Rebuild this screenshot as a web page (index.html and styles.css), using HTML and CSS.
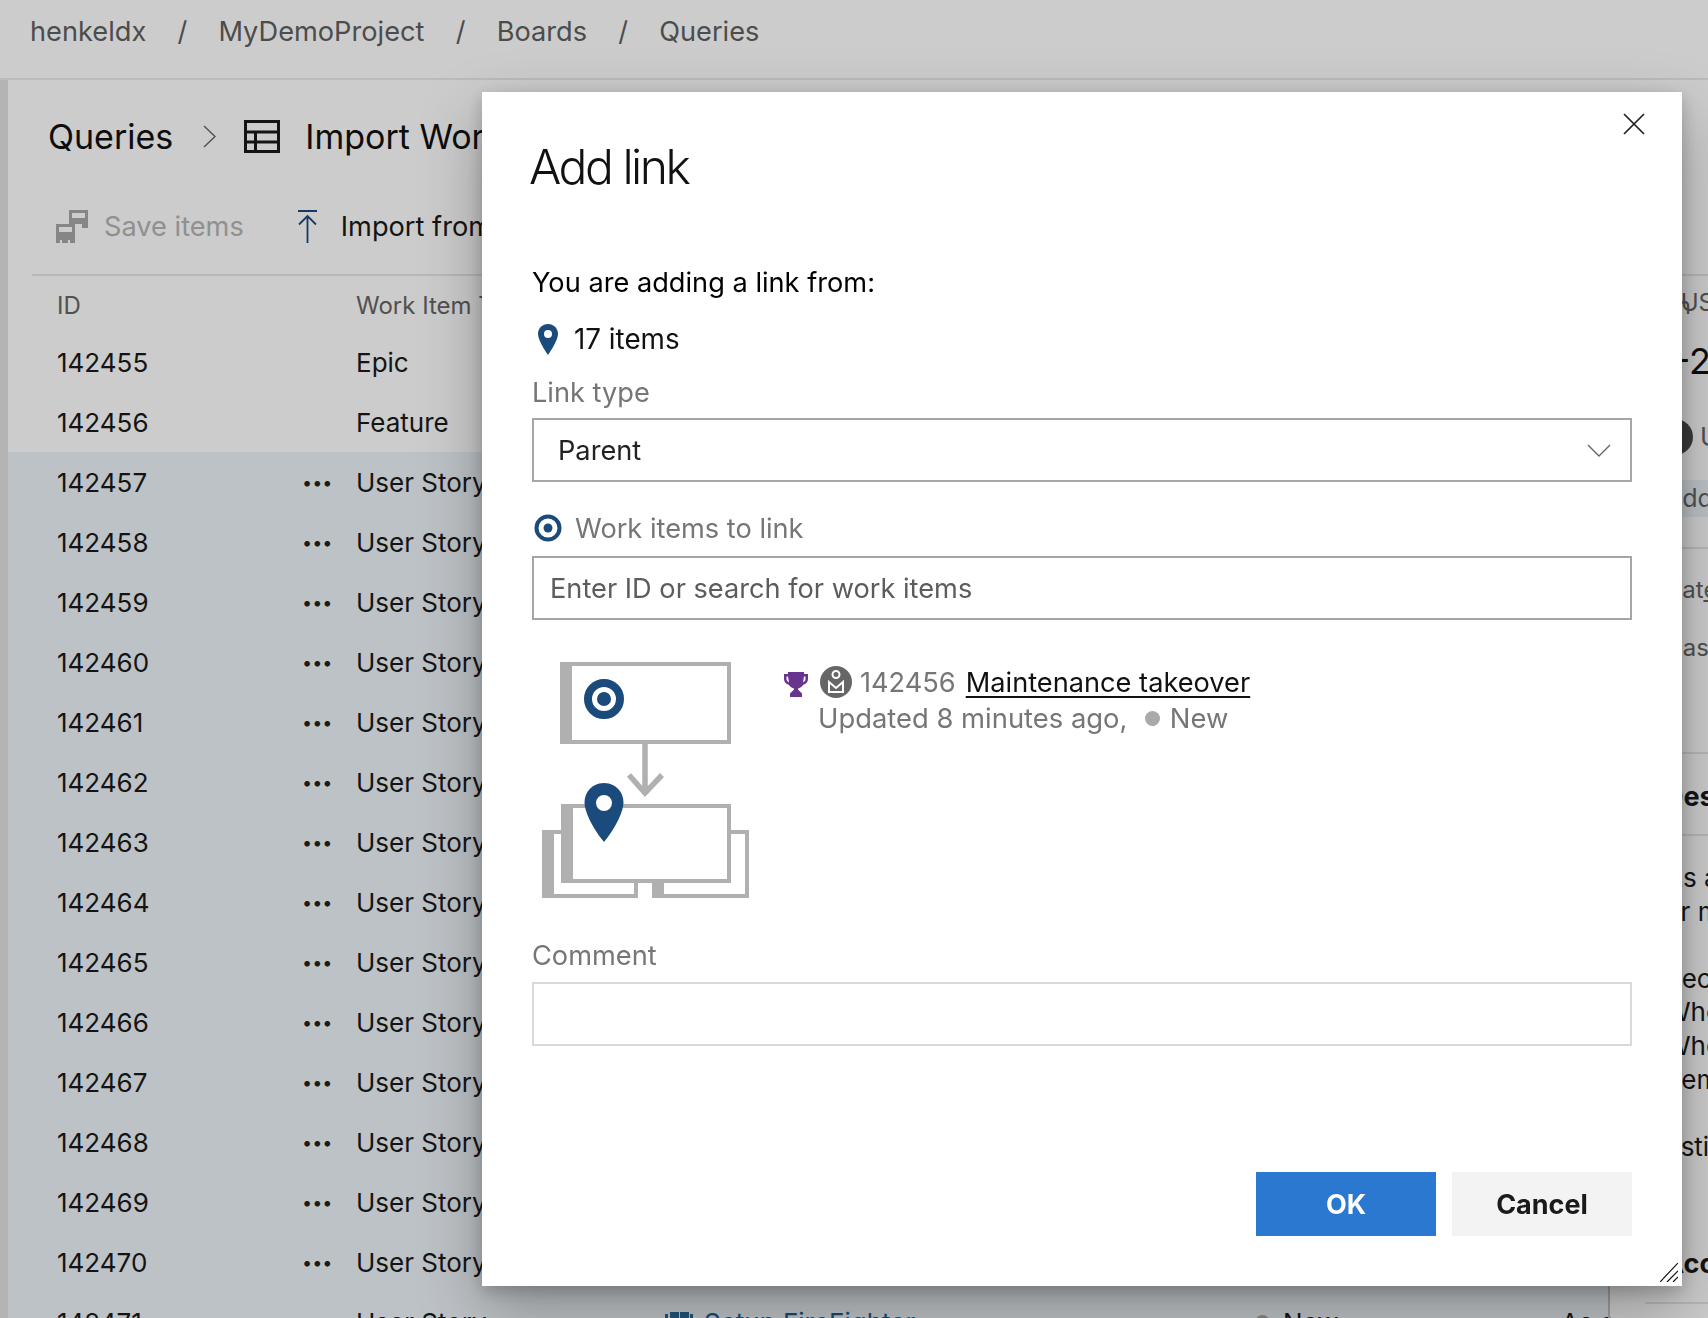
FILE: index.html
```html
<!DOCTYPE html>
<html lang="en">
<head>
<meta charset="utf-8">
<title>Add link</title>
<link rel="stylesheet" href="styles.css">
</head>
<body>
<div class="page">
  <header class="topbar">
    <span>henkeldx</span><i>/</i><span>MyDemoProject</span><i>/</i><span>Boards</span><i>/</i><span>Queries</span>
  </header>
  <div class="body">
    <div class="strip"></div>
    <main class="content">
      <div class="title-row">
        <span>Queries</span>
        <svg class="crumb-chevron" viewBox="0 0 13 23"><path d="M1 1l11 10.5L1 22" fill="none" stroke="#666" stroke-width="1.4"/></svg>
        <svg class="table-icon" viewBox="0 0 36 33"><path d="M1.500 1.500h33v30h-33zM1.500 12h33M1.500 22h33M11.500 12v19.500" fill="none" stroke="#1a1a1a" stroke-width="3"/></svg>
        <span>Import Work Items</span>
      </div>
      <div class="toolbar">
        <span class="tool disabled">
          <svg class="save-icon" viewBox="0 0 32 33"><path fill-rule="evenodd" fill="#a8a8a8" d="M13 0h19v18h-6v-4H13zM16 3v5h13V3zM0 14h19v19h-5v-3h-2v3H6v-3H4v3H0zM3 17v5h13v-5z"/></svg>
          Save items
        </span>
        <span class="tool">
          <svg class="import-icon" viewBox="0 0 20 33"><path d="M0 1h19M9.500 33V6M1 14.500l8.500-8.500 8.500 8.500" fill="none" stroke="#1b4a7d" stroke-width="1.8"/></svg>
          Import from CSV
        </span>
      </div>
      <div class="grid">
        <div class="row head"><span class="c-id">ID</span><span class="c-more"></span><span class="c-type">Work Item Type</span><span class="c-title">Title</span><span class="c-state">State</span><span class="c-desc">Description</span></div>
        <div class="row"><span class="c-id">142455</span><span class="c-more"></span><span class="c-type">Epic</span><span class="c-title"></span><span class="c-state"></span><span class="c-desc"></span></div>
        <div class="row"><span class="c-id">142456</span><span class="c-more"></span><span class="c-type">Feature</span><span class="c-title"></span><span class="c-state"></span><span class="c-desc"></span></div>
        <div class="row sel"><span class="c-id">142457</span><span class="c-more">•••</span><span class="c-type">User Story</span></div>
        <div class="row sel"><span class="c-id">142458</span><span class="c-more">•••</span><span class="c-type">User Story</span></div>
        <div class="row sel"><span class="c-id">142459</span><span class="c-more">•••</span><span class="c-type">User Story</span></div>
        <div class="row sel"><span class="c-id">142460</span><span class="c-more">•••</span><span class="c-type">User Story</span></div>
        <div class="row sel"><span class="c-id">142461</span><span class="c-more">•••</span><span class="c-type">User Story</span></div>
        <div class="row sel"><span class="c-id">142462</span><span class="c-more">•••</span><span class="c-type">User Story</span></div>
        <div class="row sel"><span class="c-id">142463</span><span class="c-more">•••</span><span class="c-type">User Story</span></div>
        <div class="row sel"><span class="c-id">142464</span><span class="c-more">•••</span><span class="c-type">User Story</span></div>
        <div class="row sel"><span class="c-id">142465</span><span class="c-more">•••</span><span class="c-type">User Story</span></div>
        <div class="row sel"><span class="c-id">142466</span><span class="c-more">•••</span><span class="c-type">User Story</span></div>
        <div class="row sel"><span class="c-id">142467</span><span class="c-more">•••</span><span class="c-type">User Story</span></div>
        <div class="row sel"><span class="c-id">142468</span><span class="c-more">•••</span><span class="c-type">User Story</span></div>
        <div class="row sel"><span class="c-id">142469</span><span class="c-more">•••</span><span class="c-type">User Story</span></div>
        <div class="row sel"><span class="c-id">142470</span><span class="c-more">•••</span><span class="c-type">User Story</span></div>
        <div class="row sel"><span class="c-id">142471</span><span class="c-more"></span><span class="c-type">User Story</span>
          <span class="c-title"><svg class="book" viewBox="0 0 28 20"><path d="M0 2h3v18H0zM5 0h9v20H5zM15 0h9v20h-9zM25 2h3v18h-3z" fill="#2a6a94"/></svg><a>Setup FireFighter</a></span>
          <span class="c-state"><b class="dot"></b>New</span><span class="c-desc">As a</span></div>
      </div>
    </main>
    <aside class="pane">
      <div class="pane-rule"></div>
      <div class="pane-line muted t-bus">BUSINESS</div>
      <div class="pane-line t-num">1-2</div>
      <div class="pane-line t-user"><b class="pane-avatar"></b>Unassigned</div>
      <div class="pane-tag">Add tag</div>
      <div class="pane-rule r2"></div>
      <div class="pane-line muted t-date">Dat<u>e</u></div>
      <div class="pane-line muted t-has">Has</div>
      <div class="pane-rule r3"></div>
      <div class="pane-line t-h">Description</div>
      <div class="pane-rule r4"></div>
      <div class="pane-text">
        <p>As a user<br>or my team</p>
        <p>Section<br>Who is it<br>When is it<br>Remember</p>
        <p>Estimate</p>
      </div>
      <div class="pane-line t-h t-acc">Acceptance</div>
      <div class="pane-rule r5"></div>
    </aside>
  </div>
</div>
<div class="overlay"></div>
<section class="modal">
  <svg class="close" viewBox="0 0 22 22"><path d="M1 1l20 20M21 1L1 21" stroke="#222" stroke-width="1.7" fill="none"/></svg>
  <h1>Add link</h1>
  <p class="from">You are adding a link from:</p>
  <div class="items">
    <svg class="pin" viewBox="0 0 20 31"><path fill-rule="evenodd" d="M10 0c5.600 0 10 4.300 10 9.800 0 5.400-5.600 15-10 21.200C5.600 24.800 0 15.200 0 9.800 0 4.300 4.400 0 10 0zm0 6a4 4 0 1 0 0 8 4 4 0 0 0 0-8z" fill="#1b4a7d"/></svg>
    <span>17 items</span>
  </div>
  <label class="lbl lbl-type">Link type</label>
  <div class="field select"><span>Parent</span>
    <svg class="chev" viewBox="0 0 24 13"><path d="M1 1l11 11L23 1" fill="none" stroke="#666" stroke-width="1.4"/></svg>
  </div>
  <div class="lbl lbl-work">
    <svg class="target" viewBox="0 0 28 28"><circle cx="14" cy="14" r="11.500" fill="none" stroke="#1b4a7d" stroke-width="4"/><circle cx="14" cy="14" r="4.500" fill="#1b4a7d"/></svg>
    Work items to link
  </div>
  <div class="field search">Enter ID or search for work items</div>
  <div class="preview">
    <svg class="diagram" viewBox="0 0 208 238">
      <path fill="#b0b0b0" d="M0 168h20v4H12v60h80v-11h4v15H0zM110 221h12v11h81v-60h-14v-4h18v68h-97z"/>
      <path d="M21 2h166v78H21z" fill="#fff" stroke="#b0b0b0" stroke-width="4"/>
      <rect x="18" y="0" width="12" height="82" fill="#b0b0b0"/>
      <path d="M21 144h166v75H21z" fill="#fff" stroke="#b0b0b0" stroke-width="4"/>
      <rect x="19" y="142" width="12" height="79" fill="#b0b0b0"/>
      <path d="M103 82v50M87 113l16 18 17-18" fill="none" stroke="#b0b0b0" stroke-width="5.500"/>
      <circle cx="62" cy="37" r="16" fill="none" stroke="#1b4a7d" stroke-width="8"/>
      <circle cx="62" cy="37" r="7" fill="#1b4a7d"/>
      <circle cx="62" cy="141" r="9" fill="#fff"/>
      <path fill-rule="evenodd" d="M62 121c11 0 19.500 8.500 19.500 19.500 0 9-8 25.500-19.500 39.500-11.500-14-19.500-30.500-19.500-39.500 0-11 8.500-19.500 19.500-19.500zm0 12a8 8 0 1 0 0 16 8 8 0 0 0 0-16z" fill="#1b4a7d"/>
    </svg>
    <div class="hit">
      <div class="hit-line">
        <svg class="trophy" viewBox="0 0 24 25"><path fill-rule="evenodd" fill="#68348f" d="M4 0h16v2h4v5c0 3-2 5-5 6-1 2-3 3-5 3.500v1l4 4V25H6v-3.500l4-4v-1C8 16 6 15 5 13c-3-1-5-3-5-6V2h4zM2.500 4.500V7c0 1.500 1 2.500 2.500 3.500L4 4.500zM21.500 4.500H20l-1 6c1.500-1 2.500-2 2.500-3.500z"/></svg>
        <svg class="avatar" viewBox="0 0 32 32"><circle cx="16" cy="16" r="16" fill="#666"/><circle cx="16" cy="8.500" r="3.500" fill="none" stroke="#fff" stroke-width="2"/><path d="M9 16l7 6 7-6v10H9z" fill="none" stroke="#fff" stroke-width="2"/></svg>
        <span class="hit-id">142456</span>
        <a class="hit-link">Maintenance takeover</a>
      </div>
      <div class="hit-meta">Updated 8 minutes ago, <b class="hit-dot"></b> New</div>
    </div>
  </div>
  <label class="lbl lbl-comment">Comment</label>
  <div class="field comment"></div>
  <div class="actions">
    <button class="btn primary">OK</button>
    <button class="btn">Cancel</button>
  </div>
  <svg class="grip" viewBox="0 0 18 19"><path d="M0 19L18 0M7 19L18 8M13 19l5-5" stroke="#111" stroke-width="1.200" fill="none"/></svg>
</section>
</body>
</html>
```
FILE: styles.css
```css
* { box-sizing: border-box; }
html, body { margin: 0; height: 100%; overflow: hidden; }
body { font-family: Inter, "Noto Sans", sans-serif; color: #1a1a1a; background: #fff; }
.page { height: 1318px; display: flex; flex-direction: column; overflow: hidden; }
.topbar { height: 80px; flex: none; background: #fff; border-bottom: 2px solid #eaeaea; padding: 0 30px 16px; display: flex; align-items: center; font-size: 27.2px; color: #5f5f5f; }
.topbar i { font-style: normal; margin: 0 31.2px; }
.body { flex: 1; display: flex; min-height: 0; }
.strip { width: 8px; flex: none; background: #e2e2e2; }
.content { width: 1600px; flex: none; }
.title-row { height: 112px; padding: 0 0 0 40px; display: flex; align-items: center; font-size: 34px; white-space: nowrap; color: #111; }
.crumb-chevron { width: 13px; height: 23px; margin: 0 28px 0 30px; }
.table-icon { width: 36px; height: 33px; margin-right: 25px; }
.toolbar { height: 84px; margin-left: 24px; padding: 0 0 14px 24px; border-bottom: 2px solid #e6e6e6; display: flex; align-items: center; gap: 54px; font-size: 27.2px; white-space: nowrap; }
.tool { display: flex; align-items: center; }
.tool.disabled { color: #b4b4b4; }
.save-icon { width: 32px; height: 33px; margin-right: 16px; }
.import-icon { width: 20px; height: 33px; margin-right: 23px; }
.grid { display: flex; flex-direction: column; }
.row { height: 60px; flex: none; display: flex; align-items: center; font-size: 26px; white-space: nowrap; }
.row.head { height: 56px; padding-top: 2px; color: #666; font-size: 24px; }
.row.sel { background: #edf3f8; }
.c-id { width: 294px; padding-left: 49px; flex: none; }
.c-more { width: 54px; flex: none; font-size: 18px; color: #222; }
.c-type { width: 309px; flex: none; }
.c-title { width: 590px; flex: none; display: flex; align-items: center; color: #1b5f8f; }
.c-state { width: 306px; flex: none; display: flex; align-items: center; }
.c-desc { flex: none; }
.book { width: 28px; height: 20px; margin-right: 11px; }
.dot { width: 15px; height: 15px; border-radius: 50%; background: #aaa; margin-right: 13px; }
.pane { flex: 1; margin-top: 194px; font-size: 26px; line-height: 33.6px; white-space: nowrap; padding-left: 57px; color: #1a1a1a; position: relative; }
.pane::before { content: ""; position: absolute; left: 0; bottom: 0; top: 760px; width: 2px; background: #c4c4c4; }
.pane-rule { height: 2px; margin-left: -12px; background: #e6e6e6; }
.pane-line { height: 40px; line-height: 40px; }
.muted { color: #666; font-size: 24px; }
.t-bus { margin-top: 7px; }
.t-num { margin: 18px 0 0 -6px; font-size: 36px; color: #111; }
.t-user { margin: 36px 0 0 -8px; height: 40px; display: flex; align-items: center; color: #666; }
.pane-avatar { width: 36px; height: 36px; border-radius: 50%; background: #4a4a4a; margin-right: 7px; flex: none; }
.pane-tag { margin: 23px 0 0 -12px; padding-left: 12px; height: 37px; line-height: 37px; background: #ecf3f8; color: #666; font-size: 25px; }
.r2 { margin-top: 30px; }
.t-date { margin-top: 21px; }
.t-has { margin-top: 18px; }
.r3 { margin-top: 84px; }
.t-h { font-weight: 700; font-size: 27px; margin-left: -1px; }
.r3 + .t-h { margin-top: 23px; }
.r4 { margin-top: 17px; }
.pane-text { margin-top: 25px; }
.pane-text p { margin: 0 0 33.6px; }
.t-acc { margin-top: 81px; }
.r5 { margin: 18px 0 0 -20px; }
.overlay { position: fixed; inset: 0; background: rgba(0,0,0,.2); }
.modal { position: absolute; left: 482px; top: 92px; width: 1200px; height: 1194px; background: #fff; box-shadow: 0 25px 60px rgba(0,0,0,.28), 0 5px 16px rgba(0,0,0,.2); padding: 0 50px; display: flex; flex-direction: column; }
.modal h1 { margin: 44px 0 0 -3px; font-size: 48px; font-weight: 300; letter-spacing: -2.5px; line-height: 62px; color: #111; }
.close { position: absolute; right: 37px; top: 21px; width: 22px; height: 22px; }
.from { margin: 66px 0 0; font-size: 27.2px; line-height: 38px; color: #000; }
.items { display: flex; align-items: center; margin: 17px 0 0 6px; height: 40px; font-size: 27.8px; color: #111; }
.pin { width: 20px; height: 31px; margin-right: 16px; }
.lbl { display: flex; align-items: center; font-size: 27.2px; color: #767676; }
.lbl-type { margin-top: 14px; height: 38px; }
.field { border: 2px solid #a6a6a6; height: 64px; width: 1100px; flex: none; display: flex; align-items: center; font-size: 27.2px; }
.select { margin-top: 7px; padding: 0 19px 0 24px; justify-content: space-between; color: #222; }
.chev { width: 24px; height: 13px; }
.lbl-work { margin-top: 27px; height: 38px; }
.target { width: 28px; height: 28px; margin: 0 13px 0 2px; }
.search { margin-top: 9px; padding-left: 16px; color: #5c5c5c; }
.preview { display: flex; margin: 42px 0 0 10px; height: 238px; }
.diagram { width: 208px; height: 238px; flex: none; margin-right: 34px; }
.hit { font-size: 27.2px; color: #767676; }
.hit-line { display: flex; align-items: center; height: 36px; margin-top: 2px; }
.trophy { width: 24px; height: 25px; margin: 4px 12px 0 0; }
.avatar { width: 32px; height: 32px; margin-right: 8px; }
.hit-link { margin-left: 10px; color: #111; text-decoration: underline; text-underline-offset: 4px; }
.hit-meta { margin: 0 0 0 34px; display: flex; align-items: center; white-space: pre; line-height: 36px; font-size: 27.4px; }
.hit-dot { width: 15px; height: 15px; border-radius: 50%; background: #aaa; margin: 0 2px 0 10px; }
.lbl-comment { margin-top: 36px; height: 38px; }
.comment { margin-top: 8px; border-color: #d9d9d9; }
.actions { margin-top: 126px; display: flex; justify-content: flex-end; gap: 16px; }
.btn { width: 180px; height: 64px; border: 0; background: #f3f3f3; font: 700 27px Inter, sans-serif; color: #1a1a1a; }
.btn.primary { background: #2b78d0; color: #fff; }
.grip { position: absolute; right: 4px; bottom: 4px; width: 18px; height: 19px; }
```
